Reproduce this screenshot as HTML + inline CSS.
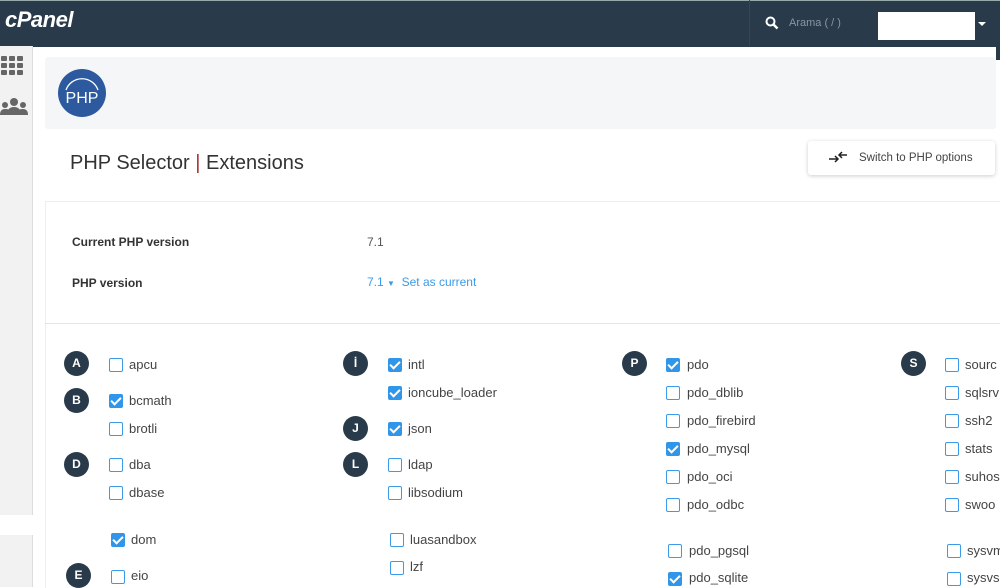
<!DOCTYPE html>
<html><head><style>
body{margin:0;width:1000px;height:587px;overflow:hidden;background:#fff;font-family:"Liberation Sans",sans-serif;position:relative}
.a{position:absolute}
.hdr{left:0;top:0;width:1000px;height:46px;background:#293a4a;border-top:1px solid #9aa}
.side{left:0;top:46px;width:32px;height:541px;background:#f2f2f2;border-right:1px solid #ddd}
.c{position:absolute;width:25px;height:25px;border-radius:50%;background:#293a4a;color:#fff;font-size:12px;font-weight:bold;text-align:center;line-height:25px}
.cb{position:absolute;width:12px;height:12px;border:1.5px solid #3b9be8;border-radius:2px;background:#fff}
.cb.k{background:#2f96ea;border-color:#2f96ea}
.cb.k::after{content:"";position:absolute;left:3px;top:0px;width:4px;height:8px;border:solid #fff;border-width:0 2px 2px 0;transform:rotate(45deg)}
.t{position:absolute;font-size:13px;color:#444}
</style></head><body>
<div class="a hdr"></div>
<div class="a" style="left:5px;top:7px;color:#fff;font-size:22px;font-weight:bold;font-style:italic;letter-spacing:-0.5px">cPanel</div>
<div class="a" style="left:749px;top:0;width:1px;height:46px;background:#34475a"></div>
<svg class="a" style="left:765px;top:16px" width="14" height="14" viewBox="0 0 14 14"><circle cx="5.5" cy="5.5" r="4" stroke="#fff" stroke-width="2" fill="none"/><path d="M8.5 8.5L12.5 12.5" stroke="#fff" stroke-width="2.5"/></svg>
<div class="a" style="left:789px;top:17px;color:#8a96a3;font-size:11px">Arama ( / )</div>
<div class="a" style="left:878px;top:12px;width:97px;height:28px;background:#fff"></div>
<div class="a" style="left:978px;top:22px;border:4px solid transparent;border-top:4px solid #fff"></div>
<div class="a" style="left:996px;top:20px;width:4px;height:40px;background:#293a4a"></div>
<div class="a side"></div>
<svg class="a" style="left:0;top:55px" width="26" height="22"><g fill="#666"><rect x="1" y="1" width="6" height="5" rx="1"/><rect x="9" y="1" width="6" height="5" rx="1"/><rect x="17" y="1" width="6" height="5" rx="1"/><rect x="1" y="8" width="6" height="5" rx="1"/><rect x="9" y="8" width="6" height="5" rx="1"/><rect x="17" y="8" width="6" height="5" rx="1"/><rect x="1" y="15" width="6" height="5" rx="1"/><rect x="9" y="15" width="6" height="5" rx="1"/><rect x="17" y="15" width="6" height="5" rx="1"/></g></svg>
<svg class="a" style="left:0;top:97px" width="28" height="20"><g fill="#666"><circle cx="14" cy="5" r="4"/><path d="M7 18q0-8 7-8t7 8z"/><circle cx="5" cy="8" r="3"/><circle cx="23" cy="8" r="3"/><path d="M0 18q0-6 5-6t4 2l-1 4z"/><path d="M28 18q0-6-5-6t-4 2l1 4z"/></g></svg>
<div class="a" style="left:0;top:515px;width:45px;height:20px;background:#fff"></div>
<div class="a" style="left:45px;top:57px;width:951px;height:72px;background:#f5f6f8;border-radius:3px"></div>
<svg class="a" style="left:57px;top:68px" width="50" height="50"><circle cx="25" cy="25" r="24" fill="#2d5a9e"/><path d="M9 22A17 17 0 0 1 41 22" stroke="#fff" stroke-width="1.3" fill="none"/><text x="25" y="35" fill="#fff" font-size="16" text-anchor="middle" font-family="Liberation Sans">PHP</text></svg>
<div class="a" style="left:70px;top:152px;font-size:20px;color:#333">PHP Selector <span style="color:#a33">|</span> Extensions</div>
<div class="a" style="left:808px;top:141px;width:187px;height:34px;background:#fff;border-radius:3px;box-shadow:0 1px 4px rgba(0,0,0,.2)"></div>
<svg class="a" style="left:828px;top:150px" width="20" height="14"><path d="M1 9H10M7 6L10 9L7 12M19 5H11M14 2L11 5L14 8" stroke="#222" stroke-width="1.5" fill="none"/></svg>
<div class="a" style="left:859px;top:152px;font-size:11.5px;color:#444">Switch to PHP options</div>
<div class="a" style="left:45px;top:201px;width:955px;height:386px;border-top:1px solid #eee;border-left:1px solid #eee"></div>
<div class="a" style="left:45px;top:323px;width:955px;height:1px;background:#e5e5e5"></div>
<div class="a" style="left:72px;top:235px;font-size:12px;font-weight:bold;color:#333">Current PHP version</div>
<div class="a" style="left:367px;top:235px;font-size:12px;color:#555">7.1</div>
<div class="a" style="left:72px;top:276px;font-size:12px;font-weight:bold;color:#333">PHP version</div>
<div class="a" style="left:367px;top:275px;font-size:12px;color:#3b9be8">7.1 <span style="font-size:8px">▼</span> &nbsp;Set as current</div>

<div class="c" style="left:64px;top:351px">A</div>
<div class="c" style="left:64px;top:388px">B</div>
<div class="c" style="left:64px;top:452px">D</div>
<div class="c" style="left:66px;top:563px">E</div>
<div class="c" style="left:343px;top:351px">İ</div>
<div class="c" style="left:343px;top:416px">J</div>
<div class="c" style="left:343px;top:452px">L</div>
<div class="c" style="left:622px;top:351px">P</div>
<div class="c" style="left:901px;top:351px">S</div>

<div class="cb" style="left:109px;top:358px"></div><div class="t" style="left:129px;top:357px">apcu</div>
<div class="cb k" style="left:109px;top:394px"></div><div class="t" style="left:129px;top:393px">bcmath</div>
<div class="cb" style="left:109px;top:422px"></div><div class="t" style="left:129px;top:421px">brotli</div>
<div class="cb" style="left:109px;top:458px"></div><div class="t" style="left:129px;top:457px">dba</div>
<div class="cb" style="left:109px;top:486px"></div><div class="t" style="left:129px;top:485px">dbase</div>
<div class="cb k" style="left:111px;top:533px"></div><div class="t" style="left:131px;top:532px">dom</div>
<div class="cb" style="left:111px;top:570px"></div><div class="t" style="left:131px;top:568px">eio</div>

<div class="cb k" style="left:388px;top:358px"></div><div class="t" style="left:408px;top:357px">intl</div>
<div class="cb k" style="left:388px;top:386px"></div><div class="t" style="left:408px;top:385px">ioncube_loader</div>
<div class="cb k" style="left:388px;top:422px"></div><div class="t" style="left:408px;top:421px">json</div>
<div class="cb" style="left:388px;top:458px"></div><div class="t" style="left:408px;top:457px">ldap</div>
<div class="cb" style="left:388px;top:486px"></div><div class="t" style="left:408px;top:485px">libsodium</div>
<div class="cb" style="left:390px;top:533px"></div><div class="t" style="left:410px;top:532px">luasandbox</div>
<div class="cb" style="left:390px;top:561px"></div><div class="t" style="left:410px;top:559px">lzf</div>

<div class="cb k" style="left:666px;top:358px"></div><div class="t" style="left:687px;top:357px">pdo</div>
<div class="cb" style="left:666px;top:386px"></div><div class="t" style="left:687px;top:385px">pdo_dblib</div>
<div class="cb" style="left:666px;top:414px"></div><div class="t" style="left:687px;top:413px">pdo_firebird</div>
<div class="cb k" style="left:666px;top:442px"></div><div class="t" style="left:687px;top:441px">pdo_mysql</div>
<div class="cb" style="left:666px;top:470px"></div><div class="t" style="left:687px;top:469px">pdo_oci</div>
<div class="cb" style="left:666px;top:498px"></div><div class="t" style="left:687px;top:497px">pdo_odbc</div>
<div class="cb" style="left:668px;top:544px"></div><div class="t" style="left:689px;top:543px">pdo_pgsql</div>
<div class="cb k" style="left:668px;top:572px"></div><div class="t" style="left:689px;top:570px">pdo_sqlite</div>

<div class="cb" style="left:945px;top:358px"></div><div class="t" style="left:965px;top:357px">sourc</div>
<div class="cb" style="left:945px;top:386px"></div><div class="t" style="left:965px;top:385px">sqlsrv</div>
<div class="cb" style="left:945px;top:414px"></div><div class="t" style="left:965px;top:413px">ssh2</div>
<div class="cb" style="left:945px;top:442px"></div><div class="t" style="left:965px;top:441px">stats</div>
<div class="cb" style="left:945px;top:470px"></div><div class="t" style="left:965px;top:469px">suhos</div>
<div class="cb" style="left:945px;top:498px"></div><div class="t" style="left:965px;top:497px">swoo</div>
<div class="cb" style="left:947px;top:544px"></div><div class="t" style="left:967px;top:543px">sysvm</div>
<div class="cb" style="left:947px;top:572px"></div><div class="t" style="left:967px;top:570px">sysvse</div>
</body></html>
